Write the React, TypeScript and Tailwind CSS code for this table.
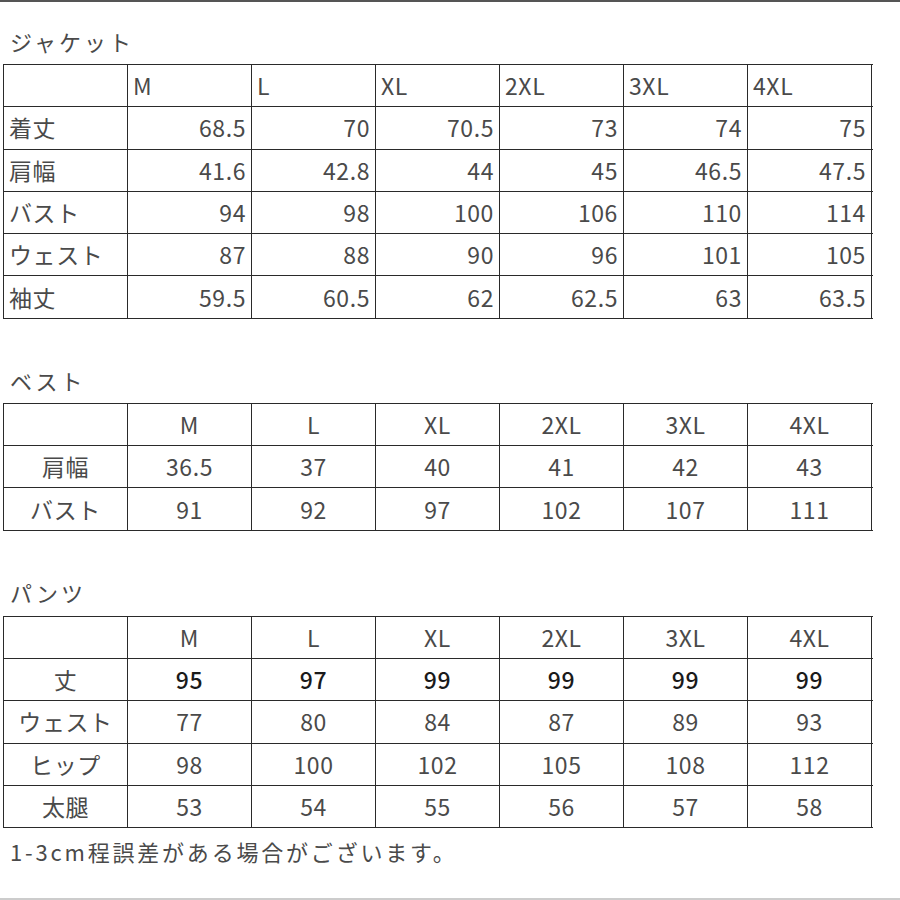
import React from "react";

const font = { fontFamily: '"Noto Sans CJK JP", "Noto Sans", sans-serif' };

type Row = { label: string; values: string[]; bold?: boolean };

const sizes = ["M", "L", "XL", "2XL", "3XL", "4XL"];

function Cell({
  children,
  align,
  bold,
}: {
  children?: React.ReactNode;
  align: "left" | "right" | "center";
  bold?: boolean;
}) {
  const a =
    align === "left" ? "justify-start" : align === "right" ? "justify-end" : "justify-center";
  return (
    <div
      className={`flex items-center ${a} px-[5px] h-full border-r-[1.5px] border-[#2a2a2a] text-[23px] leading-none tracking-[0.6px] ${
        bold ? "text-[#1a1a1a] font-medium" : "text-[#4a4a4a]"
      }`}
    >
      {children}
    </div>
  );
}

function SizeTable({
  rows,
  headerAlign,
  labelAlign,
  valueAlign,
}: {
  rows: Row[];
  headerAlign: "left" | "center";
  labelAlign: "left" | "center";
  valueAlign: "right" | "center";
}) {
  return (
    <div className="w-[870px] ml-[3px] border-l-[1.5px] border-t-[1.5px] border-[#2a2a2a]">
      <div className="grid grid-cols-[124px_repeat(6,124px)] h-[42.3px] border-b-[1.5px] border-[#2a2a2a]">
        <Cell align="left" />
        {sizes.map((s) => (
          <Cell key={s} align={headerAlign}>
            {s}
          </Cell>
        ))}
      </div>
      {rows.map((r) => (
        <div
          key={r.label}
          className="grid grid-cols-[124px_repeat(6,124px)] h-[42.3px] border-b-[1.5px] border-[#2a2a2a]"
        >
          <Cell align={labelAlign}>{r.label}</Cell>
          {r.values.map((v, i) => (
            <Cell key={i} align={valueAlign} bold={r.bold}>
              {v}
            </Cell>
          ))}
        </div>
      ))}
    </div>
  );
}

function Title({ children }: { children: React.ReactNode }) {
  return (
    <div className="h-[24px] pl-[10px] flex items-center text-[22px] leading-none text-[#4a4a4a] tracking-[3px]">
      {children}
    </div>
  );
}

export default function App() {
  const jacket: Row[] = [
    { label: "着丈", values: ["68.5", "70", "70.5", "73", "74", "75"] },
    { label: "肩幅", values: ["41.6", "42.8", "44", "45", "46.5", "47.5"] },
    { label: "バスト", values: ["94", "98", "100", "106", "110", "114"] },
    { label: "ウェスト", values: ["87", "88", "90", "96", "101", "105"] },
    { label: "袖丈", values: ["59.5", "60.5", "62", "62.5", "63", "63.5"] },
  ];
  const vest: Row[] = [
    { label: "肩幅", values: ["36.5", "37", "40", "41", "42", "43"] },
    { label: "バスト", values: ["91", "92", "97", "102", "107", "111"] },
  ];
  const pants: Row[] = [
    { label: "丈", values: ["95", "97", "99", "99", "99", "99"], bold: true },
    { label: "ウェスト", values: ["77", "80", "84", "87", "89", "93"] },
    { label: "ヒップ", values: ["98", "100", "102", "105", "108", "112"] },
    { label: "太腿", values: ["53", "54", "55", "56", "57", "58"] },
  ];
  return (
    <div className="w-[900px] h-[900px] bg-white flex flex-col" style={font}>
      <div className="h-[2px] bg-[#555] w-full" />
      <div className="h-[27px]" />
      <Title>ジャケット</Title>
      <div className="h-[11px]" />
      <SizeTable rows={jacket} headerAlign="left" labelAlign="left" valueAlign="right" />
      <div className="h-[49px]" />
      <Title>ベスト</Title>
      <div className="h-[11px]" />
      <SizeTable rows={vest} headerAlign="center" labelAlign="center" valueAlign="center" />
      <div className="h-[49px]" />
      <Title>パンツ</Title>
      <div className="h-[12px]" />
      <SizeTable rows={pants} headerAlign="center" labelAlign="center" valueAlign="center" />
      <div className="h-[11px]" />
      <div className="h-[24px] pl-[10px] flex items-center text-[22px] leading-none text-[#4a4a4a] tracking-[2.8px]">
        1-3cm程誤差がある場合がございます。
      </div>
      <div className="flex-1" />
      <div className="h-[2px] bg-[#ccc] w-full" />
    </div>
  );
}
